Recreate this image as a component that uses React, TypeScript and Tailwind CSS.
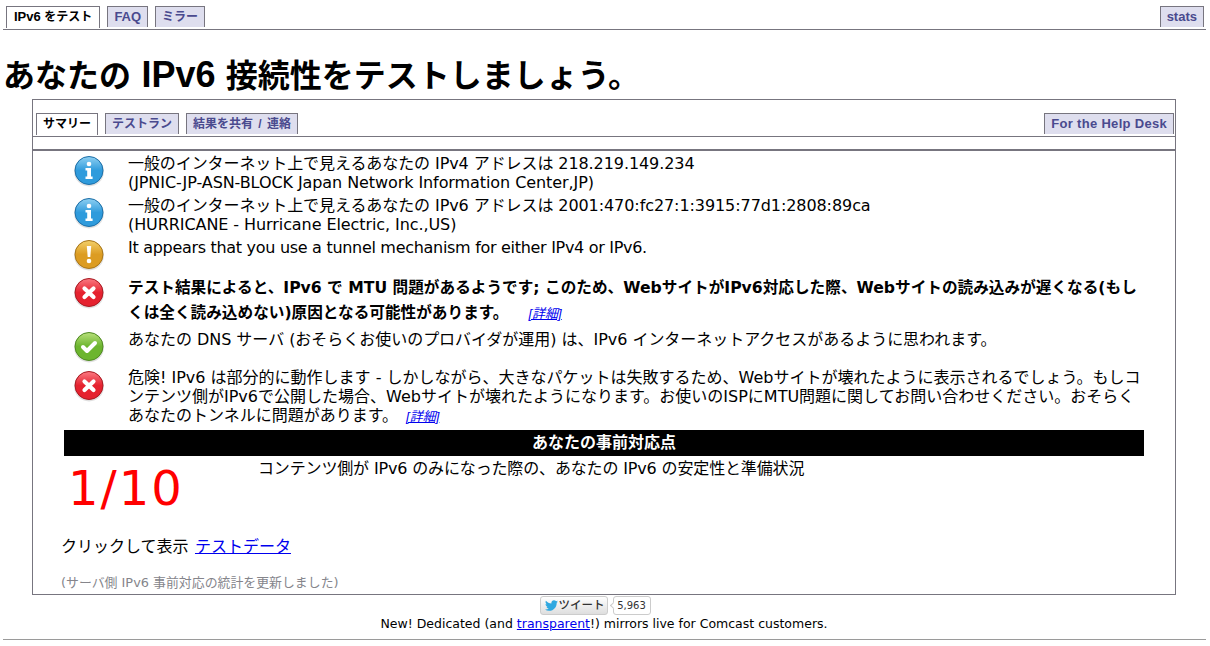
import React from "react";
import { FaTwitter } from "react-icons/fa";

const sans = "[font-family:'DejaVu_Sans','Noto_Sans_CJK_JP',sans-serif]";

function Tab({ children, active, className = "" }: { children: React.ReactNode; active?: boolean; className?: string }) {
  return (
    <div
      className={
        "border border-b-0 border-[#77757f] text-[13px] leading-[19px] font-bold whitespace-nowrap [font-family:'Liberation_Sans','Noto_Sans_CJK_JP',sans-serif] " +
        (active ? "bg-white text-black h-[22px] -mb-px relative " : "bg-[#dedeee] text-[#4a4a8e] h-[21px] ") +
        className
      }
    >
      {children}
    </div>
  );
}

function Ja({ children }: { children: React.ReactNode }) {
  return <span className="text-[12px]">{children}</span>;
}

function StatusIcon({ kind, id }: { kind: "info" | "warn" | "err" | "ok"; id: string }) {
  const c = {
    info: ["#8fd0f2", "#2f9bdc", "#1c6fa8"],
    warn: ["#f3d06a", "#dc9c22", "#a8761a"],
    err: ["#fb7a82", "#e5222f", "#a81a22"],
    ok: ["#b9e07c", "#6cb52e", "#4f8a22"],
  }[kind];
  return (
    <svg width="32" height="32" viewBox="0 0 32 32">
      <defs>
        <linearGradient id={id} x1="0" y1="0" x2="0" y2="1">
          <stop offset="0" stopColor={c[0]} />
          <stop offset="0.5" stopColor={c[1]} />
          <stop offset="1" stopColor={c[1]} />
        </linearGradient>
      </defs>
      <circle cx="16" cy="16.5" r="15" fill="#000" opacity="0.12" />
      <circle cx="16" cy="15.5" r="14" fill={`url(#${id})`} stroke={c[2]} strokeWidth="1" />
      {kind === "info" && (
        <g fill="#fff">
          <circle cx="16" cy="9" r="2.3" />
          <path d="M12.5 13h5.5v8.5h1.6V24h-7.1v-2.5h1.7v-6h-1.7z" />
        </g>
      )}
      {kind === "warn" && (
        <g fill="#fff">
          <path d="M13.8 7h4.4l-.9 11h-2.6z" />
          <circle cx="16" cy="22" r="2.3" />
        </g>
      )}
      {kind === "err" && <path d="M11.5 11.5l9 8.5M20.5 11.5l-9 8.5" stroke="#fff" strokeWidth="4.2" strokeLinecap="round" />}
      {kind === "ok" && <path d="M10 16l4 4 8-8" fill="none" stroke="#fff" strokeWidth="4" strokeLinecap="round" strokeLinejoin="round" />}
    </svg>
  );
}

function Row({ kind, id, children, className = "", iconClass = "pt-[1px]" }: { kind: "info" | "warn" | "err" | "ok"; id: string; children: React.ReactNode; className?: string; iconClass?: string }) {
  return (
    <div className={"flex " + className}>
      <div className={"w-[50px] shrink-0 flex justify-center items-start " + iconClass}>
        <StatusIcon kind={kind} id={id} />
      </div>
      <div className="flex-1 pl-[14px]">{children}</div>
    </div>
  );
}

function Detail({ className }: { className: string }) {
  return (
    <a className={"text-[13px] italic underline text-[#0000ee] font-normal [font-family:'Liberation_Sans','Noto_Sans_CJK_JP',sans-serif] " + className}>[詳細]</a>
  );
}

export default function App() {
  return (
    <div className={"w-[1210px] h-[646px] bg-white text-black overflow-hidden " + sans}>
      <div className="mx-[3px] w-[1203px] pt-[6px] h-[30px] border-b border-[#77757f] flex items-start gap-[7px] pl-[3px] pr-[2px]">
        <Tab active className="px-[7px]">
          IPv6 <Ja>をテスト</Ja>
        </Tab>
        <Tab className="px-[6px]">FAQ</Tab>
        <Tab className="px-[6px]">
          <Ja>ミラー</Ja>
        </Tab>
        <Tab className="ml-auto px-[6px]">stats</Tab>
      </div>

      <h1 className="pl-[3px] mt-[25px] h-[44px] text-[32px] leading-[40px] font-bold whitespace-nowrap [word-spacing:1.5px] [font-family:'Liberation_Sans','Noto_Sans_CJK_JP',sans-serif]">
        あなたの <span className="text-[36px]">IPv6</span> 接続性をテストしましょう。
      </h1>

      <div className="ml-[32px] w-[1144px] h-[496px] border border-[#77757f]">
        <div className="mt-[13px] h-[24px] border-b border-[#77757f] flex items-start gap-[7px] pl-[3px] pr-[1px]">
          <Tab active className="px-[6px]">
            <Ja>サマリー</Ja>
          </Tab>
          <Tab className="px-[6px]">
            <Ja>テストラン</Ja>
          </Tab>
          <Tab className="px-[6px] [word-spacing:2px]">
            <Ja>結果を共有 / 連絡</Ja>
          </Tab>
          <Tab className="ml-auto px-[6px] tracking-[0.3px]">For the Help Desk</Tab>
        </div>
        <div className="mt-[12px] h-[2px] bg-[#77757f]" />

        <div className="mr-[31px] ml-[31px] text-[16px] leading-[19px] mt-[3px]">
          <Row kind="info" id="g1" className="tracking-[-0.08px]">
            一般のインターネット上で見えるあなたの IPv4 アドレスは 218.219.149.234
            <br />
            (JPNIC-JP-ASN-BLOCK Japan Network Information Center,JP)
          </Row>
          <Row kind="info" id="g2" className="mt-[4px] tracking-[-0.08px]">
            一般のインターネット上で見えるあなたの IPv6 アドレスは 2001:470:fc27:1:3915:77d1:2808:89ca
            <br />
            (HURRICANE - Hurricane Electric, Inc.,US)
          </Row>
          <Row kind="warn" id="g3" className="mt-[4px] h-[38px] tracking-[-0.3px]">
            <div className="pt-[1px] -mt-[1px]">It appears that you use a tunnel mechanism for either IPv4 or IPv6.</div>
          </Row>
          <Row kind="err" id="g4" iconClass="pt-[2px]" className="text-[15.65px] leading-[25px] font-bold h-[55px] -mt-[1px]">
            テスト結果によると、IPv6 で MTU 問題があるようです; このため、WebサイトがIPv6対応した際、Webサイトの読み込みが遅くなる(もし
            <br />
            くは全く読み込めない)原因となる可能性があります。
            <Detail className="ml-[20px]" />
          </Row>
          <Row kind="ok" id="g5" className="h-[38px] tracking-[-0.03px]">
            あなたの DNS サーバ (おそらくお使いのプロバイダが運用) は、IPv6 インターネットアクセスがあるように思われます。
          </Row>
          <Row kind="err" id="g6" iconClass="pt-[2px]" className="h-[62px]">
            危険! IPv6 は部分的に動作します - しかしながら、大きなパケットは失敗するため、Webサイトが壊れたように表示されるでしょう。もしコンテンツ側がIPv6で公開した場合、Webサイトが壊れたようになります。お使いのISPにMTU問題に関してお問い合わせください。おそらくあなたのトンネルに問題があります。
            <Detail className="ml-[8px]" />
          </Row>
          <div className="bg-black text-white text-center font-bold h-[26px] leading-[26px] text-[16px] [font-family:'Liberation_Sans','Noto_Sans_CJK_JP',sans-serif]">
            あなたの事前対応点
          </div>
          <div className="flex h-[68px]">
            <div className="w-[194px] pl-[2px] ml-[2px] text-[48px] leading-[56px] tracking-[2px] text-[#ff0000] mt-[4px]">1/10</div>
            <div className="-ml-[2px] text-[16px] leading-[19px] mt-[3px] tracking-[-0.15px]">コンテンツ側が IPv6 のみになった際の、あなたの IPv6 の安定性と準備状況</div>
          </div>
        </div>

        <div className="ml-[28px] mt-[13px] text-[16px] leading-[20px] [font-family:'Liberation_Sans','Noto_Sans_CJK_JP',sans-serif]">
          クリックして表示 <a className="ml-[2px] text-[#0000ee] underline">テストデータ</a>
        </div>
        <div className="ml-[28px] mt-[18px] text-[12.9px] leading-[16px] text-[#85858b]">(サーバ側 IPv6 事前対応の統計を更新しました)</div>
      </div>

      <div className="flex justify-center items-center gap-[5px] h-[19px] mt-[1px] pr-[20px]">
        <div className="h-[19px] w-[68px] rounded-[3px] border border-[#ccc] bg-gradient-to-b from-white to-[#dedede] flex items-center pl-[4px] gap-[1px] text-[11.5px] font-medium text-[#333] whitespace-nowrap">
          <FaTwitter className="text-[#2fa8e0] text-[13px] shrink-0" />
          ツイート
        </div>
        <div className="relative h-[19px] w-[38px] rounded-[3px] border border-[#ccc] bg-white text-center text-[10px] leading-[17px] text-[#333]">
          <span className="absolute left-[-3px] top-[6px] w-[5px] h-[5px] rotate-45 bg-white border-l border-b border-[#ccc]" />
          <span className="relative">5,963</span>
        </div>
      </div>
      <div className="text-center text-[12.5px] leading-[16px] pr-[2px] mt-[1px]">
        New! Dedicated (and <a className="text-[#0000ee] underline">transparent</a>!) mirrors live for Comcast customers.
      </div>
      <div className="mx-[3px] w-[1203px] mt-[7px] border-b border-[#9a9a9a]" />
    </div>
  );
}
